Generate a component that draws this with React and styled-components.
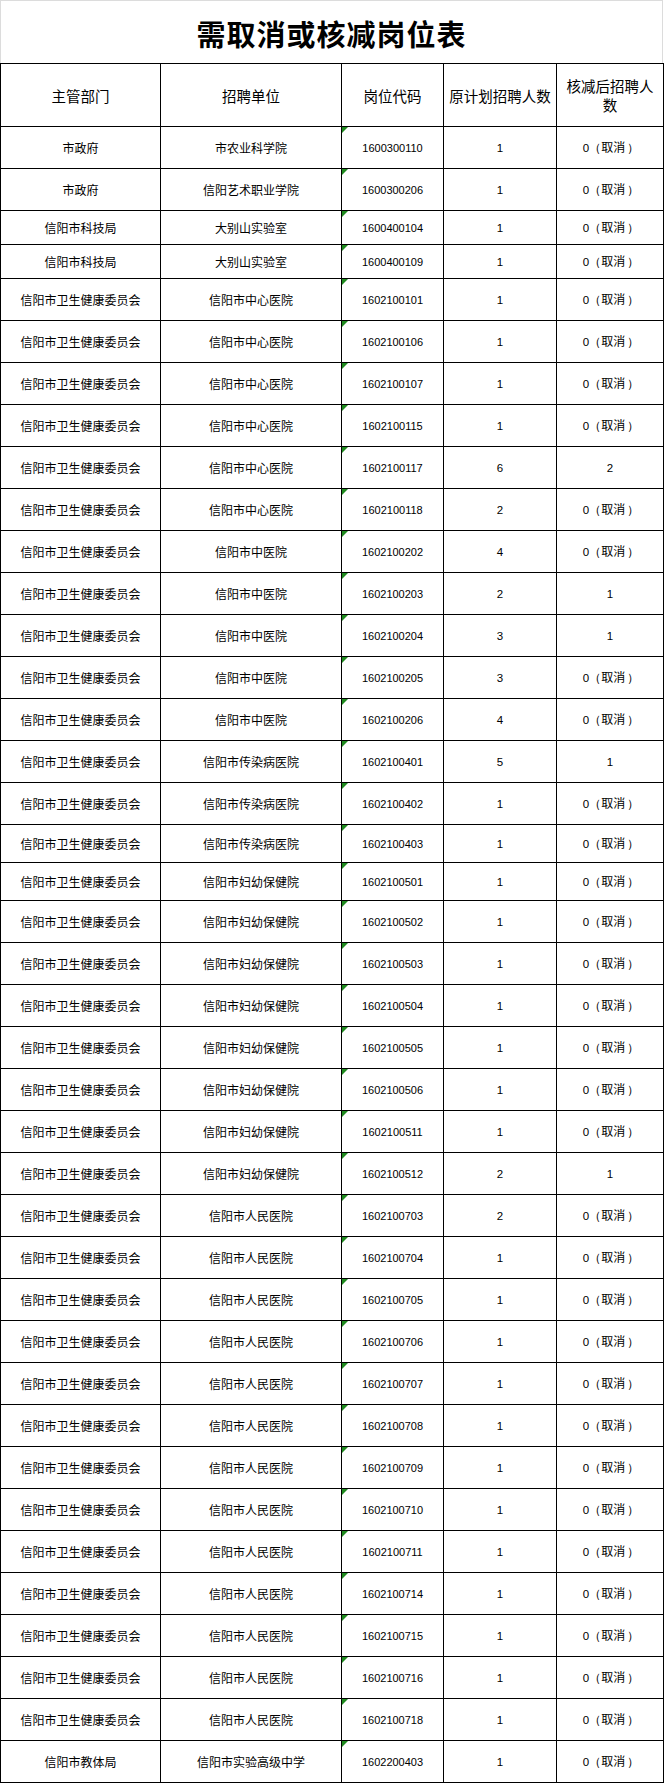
import React from 'react'
import styled, { createGlobalStyle } from 'styled-components';

const GlobalStyle = createGlobalStyle`
    html, body {
        margin: 0;
        padding: 0;
        background: #fff;
    }
    body {
        font-family: "Noto Sans CJK SC", "Liberation Sans", sans-serif;
        color: #000;
    }
`;

const rows = [
    ['市政府', '市农业科学院', '1600300110', '1', null],
    ['市政府', '信阳艺术职业学院', '1600300206', '1', null],
    ['信阳市科技局', '大别山实验室', '1600400104', '1', null, 34],
    ['信阳市科技局', '大别山实验室', '1600400109', '1', null, 34],
    ['信阳市卫生健康委员会', '信阳市中心医院', '1602100101', '1', null],
    ['信阳市卫生健康委员会', '信阳市中心医院', '1602100106', '1', null],
    ['信阳市卫生健康委员会', '信阳市中心医院', '1602100107', '1', null],
    ['信阳市卫生健康委员会', '信阳市中心医院', '1602100115', '1', null],
    ['信阳市卫生健康委员会', '信阳市中心医院', '1602100117', '6', '2'],
    ['信阳市卫生健康委员会', '信阳市中心医院', '1602100118', '2', null],
    ['信阳市卫生健康委员会', '信阳市中医院', '1602100202', '4', null],
    ['信阳市卫生健康委员会', '信阳市中医院', '1602100203', '2', '1'],
    ['信阳市卫生健康委员会', '信阳市中医院', '1602100204', '3', '1'],
    ['信阳市卫生健康委员会', '信阳市中医院', '1602100205', '3', null],
    ['信阳市卫生健康委员会', '信阳市中医院', '1602100206', '4', null],
    ['信阳市卫生健康委员会', '信阳市传染病医院', '1602100401', '5', '1'],
    ['信阳市卫生健康委员会', '信阳市传染病医院', '1602100402', '1', null],
    ['信阳市卫生健康委员会', '信阳市传染病医院', '1602100403', '1', null, 38],
    ['信阳市卫生健康委员会', '信阳市妇幼保健院', '1602100501', '1', null, 38],
    ['信阳市卫生健康委员会', '信阳市妇幼保健院', '1602100502', '1', null],
    ['信阳市卫生健康委员会', '信阳市妇幼保健院', '1602100503', '1', null],
    ['信阳市卫生健康委员会', '信阳市妇幼保健院', '1602100504', '1', null],
    ['信阳市卫生健康委员会', '信阳市妇幼保健院', '1602100505', '1', null],
    ['信阳市卫生健康委员会', '信阳市妇幼保健院', '1602100506', '1', null],
    ['信阳市卫生健康委员会', '信阳市妇幼保健院', '1602100511', '1', null],
    ['信阳市卫生健康委员会', '信阳市妇幼保健院', '1602100512', '2', '1'],
    ['信阳市卫生健康委员会', '信阳市人民医院', '1602100703', '2', null],
    ['信阳市卫生健康委员会', '信阳市人民医院', '1602100704', '1', null],
    ['信阳市卫生健康委员会', '信阳市人民医院', '1602100705', '1', null],
    ['信阳市卫生健康委员会', '信阳市人民医院', '1602100706', '1', null],
    ['信阳市卫生健康委员会', '信阳市人民医院', '1602100707', '1', null],
    ['信阳市卫生健康委员会', '信阳市人民医院', '1602100708', '1', null],
    ['信阳市卫生健康委员会', '信阳市人民医院', '1602100709', '1', null],
    ['信阳市卫生健康委员会', '信阳市人民医院', '1602100710', '1', null],
    ['信阳市卫生健康委员会', '信阳市人民医院', '1602100711', '1', null],
    ['信阳市卫生健康委员会', '信阳市人民医院', '1602100714', '1', null],
    ['信阳市卫生健康委员会', '信阳市人民医院', '1602100715', '1', null],
    ['信阳市卫生健康委员会', '信阳市人民医院', '1602100716', '1', null],
    ['信阳市卫生健康委员会', '信阳市人民医院', '1602100718', '1', null],
    ['信阳市教体局', '信阳市实验高级中学', '1602200403', '1', null],
];

// each header is a list of lines
const headers = [['主管部门'], ['招聘单位'], ['岗位代码'], ['原计划招聘人数'], ['核减后招聘人', '数']];
const colWidths = [160, 181, 102, 113, 107];

function Cancelled() {
  return (
    <>
      0<Paren $side="open">（</Paren><Cancel>取消</Cancel><Paren $side="close">）</Paren>
    </>
  )
}

function App() {
  return (
    <>
      <GlobalStyle />
      <Sheet>
        <Title>需取消或核减岗位表</Title>
        <Table>
          <colgroup>
            {colWidths.map((w, i) => <col key={i} style={{ width: w }} />)}
          </colgroup>
          <thead>
            <HeadRow>
              {headers.map((lines) => (
                <HeadCell key={lines.join('')}>
                  {lines.map((l) => <HeadLine key={l}>{l}</HeadLine>)}
                </HeadCell>
              ))}
            </HeadRow>
          </thead>
          <tbody>
            {rows.map(([dept, unit, code, plan, after, h]) => (
              <Row key={code} $h={h || 42}>
                <Cell>{dept}</Cell>
                <Cell>{unit}</Cell>
                <CodeCell><Flag />{code}</CodeCell>
                <NumCell>{plan}</NumCell>
                <NumCell>{after ? after : <Cancelled />}</NumCell>
              </Row>
            ))}
          </tbody>
        </Table>
      </Sheet>
    </>
  )
}

export default App;

const Sheet = styled.div`
    width: 663px;
    background: #fff;
`;

const Title = styled.div`
    height: 63px;
    border: 1px solid #dcdcdc;
    border-bottom: none;
    display: flex;
    align-items: center;
    justify-content: center;
    font-size: 29px;
    font-weight: bold;
    letter-spacing: 1px;
    padding-top: 2px;
    box-sizing: border-box;
`;

const Table = styled.table`
    width: 663px;
    table-layout: fixed;
    border-collapse: collapse;
`;

const HeadRow = styled.tr`
    height: 63px;
`;

const HeadCell = styled.th`
    border: 1px solid #000;
    font-weight: normal;
    font-size: 14.5px;
    line-height: 19px;
    padding: 0 1px;
    text-align: center;
    vertical-align: middle;
    white-space: nowrap;
`;

const HeadLine = styled.div``;

const Row = styled.tr`
    height: ${(p) => p.$h}px;
`;

const Cell = styled.td`
    border: 1px solid #000;
    font-size: 12px;
    line-height: 16px;
    padding: 0 3px;
    text-align: center;
    vertical-align: middle;
    white-space: nowrap;
`;

const NumCell = styled(Cell)`
    font-family: "Liberation Sans", "Noto Sans CJK SC", sans-serif;
    font-size: 11.5px;
`;

const Cancel = styled.span`
    font-family: "Noto Sans CJK SC", sans-serif;
    font-size: 12px;
`;

const Paren = styled.span`
    display: inline-block;
    width: 12px;
    font-family: "Liberation Sans", sans-serif;
    font-size: 12px;
    text-align: ${(p) => (p.$side === 'open' ? 'right' : 'left')};
    padding: ${(p) => (p.$side === 'open' ? '0 2px 0 0' : '0 0 0 2px')};
    box-sizing: border-box;
`;

const CodeCell = styled(NumCell)`
    position: relative;
    font-size: 11px;
`;

const Flag = styled.span`
    position: absolute;
    top: 0;
    left: 0;
    width: 0;
    height: 0;
    border-top: 6px solid #1f8a1f;
    border-right: 6px solid transparent;
`;
